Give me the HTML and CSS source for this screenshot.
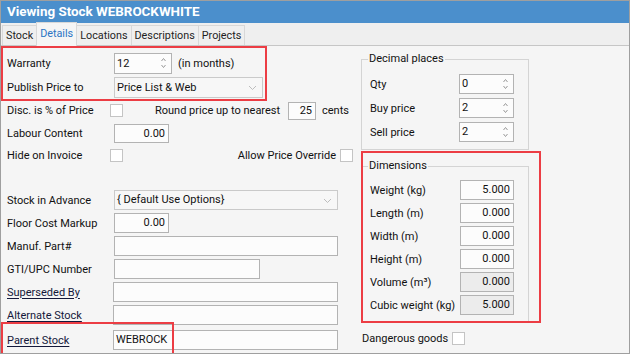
FILE: index.html
```html
<!DOCTYPE html>
<html lang="en">
<head>
  <meta charset="UTF-8" />
  <title>Viewing Stock WEBROCKWHITE</title>
  <link rel="stylesheet" href="styles.css">
</head>
<body>
  <div class="window">
    <div class="titlebar">Viewing Stock WEBROCKWHITE</div>

    <div class="tabs">
      <div class="tab">Stock</div>
      <div class="tab active">Details</div>
      <div class="tab">Locations</div>
      <div class="tab">Descriptions</div>
      <div class="tab">Projects</div>
    </div>

    <div class="panel">
      <div class="col-left">
        <div class="row tall">
          <span class="lbl">Warranty</span>
          <div class="field spin w58">12
            <svg class="arrows" width="7" height="14" viewBox="0 0 7 14"><path d="M1.5 5 L3.5 2.5 L5.5 5 M1.5 9 L3.5 11.5 L5.5 9" /></svg>
          </div>
          <span class="after">(in months)</span>
        </div>
        <div class="row tall">
          <span class="lbl">Publish Price to</span>
          <div class="field combo w149">Price List &amp; Web
            <svg class="chev" width="9" height="6" viewBox="0 0 9 6"><path d="M1 1 L4.5 4.5 L8 1" /></svg>
          </div>
        </div>
        <div class="row short">
          <span class="lbl cb">Disc. is % of Price</span>
          <span class="check"></span>
          <span class="round-lbl">Round price up to nearest</span>
          <div class="field num w28 h18">25</div>
          <span class="after">cents</span>
        </div>
        <div class="row">
          <span class="lbl">Labour Content</span>
          <div class="field num w55 h19">0.00</div>
        </div>
        <div class="row shorter">
          <span class="lbl cb">Hide on Invoice</span>
          <span class="check"></span>
          <span class="override">Allow Price Override</span>
          <span class="check"></span>
        </div>

        <div class="row spaced">
          <span class="lbl">Stock in Advance</span>
          <div class="field combo w224">{ Default Use Options}
            <svg class="chev" width="9" height="6" viewBox="0 0 9 6"><path d="M1 1 L4.5 4.5 L8 1" /></svg>
          </div>
        </div>
        <div class="row">
          <span class="lbl">Floor Cost Markup</span>
          <div class="field num w55">0.00</div>
        </div>
        <div class="row">
          <span class="lbl">Manuf. Part#</span>
          <div class="field w224"></div>
        </div>
        <div class="row">
          <span class="lbl">GTI/UPC Number</span>
          <div class="field w146"></div>
        </div>
        <div class="row">
          <span class="lbl link">Superseded By</span>
          <div class="field w225"></div>
        </div>
        <div class="row">
          <span class="lbl link">Alternate Stock</span>
          <div class="field w225"></div>
        </div>
        <div class="row parent">
          <span class="lbl link">Parent Stock</span>
          <div class="field w225">WEBROCK</div>
        </div>
      </div>

      <div class="col-right">
        <fieldset class="group decimals">
          <legend>Decimal places</legend>
          <div class="grow">
            <span class="glbl">Qty</span>
            <div class="field spin w55">0
              <svg class="arrows" width="7" height="14" viewBox="0 0 7 14"><path d="M1.5 5 L3.5 2.5 L5.5 5 M1.5 9 L3.5 11.5 L5.5 9" /></svg>
            </div>
          </div>
          <div class="grow">
            <span class="glbl">Buy price</span>
            <div class="field spin w55">2
              <svg class="arrows" width="7" height="14" viewBox="0 0 7 14"><path d="M1.5 5 L3.5 2.5 L5.5 5 M1.5 9 L3.5 11.5 L5.5 9" /></svg>
            </div>
          </div>
          <div class="grow">
            <span class="glbl">Sell price</span>
            <div class="field spin w55">2
              <svg class="arrows" width="7" height="14" viewBox="0 0 7 14"><path d="M1.5 5 L3.5 2.5 L5.5 5 M1.5 9 L3.5 11.5 L5.5 9" /></svg>
            </div>
          </div>
        </fieldset>

        <fieldset class="group dims">
          <legend>Dimensions</legend>
          <div class="grow"><span class="glbl">Weight (kg)</span><div class="field num w54">5.000</div></div>
          <div class="grow"><span class="glbl">Length (m)</span><div class="field num w54">0.000</div></div>
          <div class="grow"><span class="glbl">Width (m)</span><div class="field num w54">0.000</div></div>
          <div class="grow"><span class="glbl">Height (m)</span><div class="field num w54">0.000</div></div>
          <div class="grow"><span class="glbl">Volume (m³)</span><div class="field num w54 readonly">0.000</div></div>
          <div class="grow"><span class="glbl">Cubic weight (kg)</span><div class="field num w54 readonly">5.000</div></div>
        </fieldset>

        <div class="row danger">
          <span class="dlbl">Dangerous goods</span>
          <span class="check"></span>
        </div>
      </div>
    </div>

    <!-- highlight marks drawn over the form -->
    <div class="mark mark-warranty"></div>
    <div class="mark mark-dims"></div>
    <div class="mark mark-parent"></div>
  </div>
</body>
</html>
```

FILE: styles.css
```css
html, body {
  margin: 0;
  padding: 0;
}
body {
  background-color: #ffffff;
  font-family: Roboto, "Liberation Sans", sans-serif;
  font-size: 11px;
  color: #111111;
}
.window {
  position: relative;
  width: 630px;
  height: 354px;
  box-sizing: border-box;
  border: 1px solid #9f9f9f;
  background-color: #f5f5f5;
  overflow: hidden;
}
.titlebar {
  height: 22px;
  line-height: 21px;
  padding-left: 6px;
  background-color: #4b8fcc;
  color: #ffffff;
  font-weight: bold;
  font-size: 13.4px;
}
.tabs {
  display: flex;
  align-items: flex-end;
  height: 22px;
  padding-left: 1px;
  background-color: #efefef;
  border-bottom: 1px solid #c6c6c6;
}
.tab {
  height: 19px;
  line-height: 20px;
  padding: 0 3px;
  border: 1px solid #d8d8d8;
  border-bottom: none;
  margin-right: -1px;
  font-size: 10.8px;
  color: #1e1e1e;
}
.tab.active {
  position: relative;
  height: 23px;
  line-height: 22px;
  margin-bottom: -1px;
  background-color: #f5f5f5;
  color: #2a74c4;
  z-index: 1;
}
.panel {
  display: flex;
  padding: 7px 0 0 6px;
}
.col-left {
  display: flex;
  flex-direction: column;
  gap: 3px;
  width: 353px;
}
.row {
  display: flex;
  align-items: center;
  height: 20px;
}
.row.tall {
  height: 21px;
}
.row.short {
  height: 19px;
}
.row.shorter {
  height: 18px;
}
.row.spaced {
  margin-top: 23px;
}
.row.parent {
  margin-top: 2px;
}
.lbl {
  width: 107px;
  flex-shrink: 0;
  white-space: nowrap;
}
.lbl.cb {
  width: 103px;
}
.lbl.link {
  width: 106px;
  text-decoration: underline;
  text-underline-offset: 2px;
  color: #14183a;
}
.after {
  margin-left: 6px;
}
.round-lbl {
  margin-left: 32px;
  width: 133px;
  white-space: nowrap;
}
.override {
  margin-left: auto;
  margin-right: 4px;
  white-space: nowrap;
}
.row.shorter .check:last-child {
  margin-right: 7px;
}
.check {
  width: 11px;
  height: 11px;
  border: 1px solid #c4c4c4;
  background-color: #ffffff;
  flex-shrink: 0;
}
.field {
  position: relative;
  box-sizing: border-box;
  height: 20px;
  line-height: 18px;
  padding: 0 3px 0 2px;
  border: 1px solid #b3b3b3;
  background-color: #fcfcfc;
  white-space: nowrap;
  flex-shrink: 0;
}
.row.tall .field {
  height: 21px;
  line-height: 19px;
}
.field.h18 {
  height: 18px;
  line-height: 16px;
}
.field.h19 {
  height: 19px;
  line-height: 17px;
}
.field.num {
  text-align: right;
}
.field.readonly {
  background-color: #ececec;
}
.field.combo {
  border-color: #cacaca;
  background-color: #f7f7f7;
}
.w28 { width: 28px; }
.w54 { width: 54px; }
.w55 { width: 55px; }
.w58 { width: 58px; }
.w146 { width: 146px; }
.w149 { width: 149px; }
.w224 { width: 224px; }
.w225 { width: 225px; }
.arrows {
  position: absolute;
  right: 4px;
  top: 2px;
}
.arrows path {
  fill: none;
  stroke: #9a9a9a;
  stroke-width: 1;
}
.chev {
  position: absolute;
  right: 5px;
  top: 7px;
}
.chev path {
  fill: none;
  stroke: #bdbdbd;
  stroke-width: 1;
}
.col-right {
  width: 168px;
  margin-top: -1px;
  margin-left: 1px;
}
.group {
  box-sizing: border-box;
  width: 168px;
  margin: 0;
  padding: 8px 0 7px 8px;
  border: 1px solid #d4d4d4;
  display: flex;
  flex-direction: column;
  gap: 4px;
}
.group legend {
  padding: 0 1px;
  margin-left: -2px;
  line-height: 14px;
}
.group.dims {
  margin-top: 9px;
  padding-top: 7px;
  padding-bottom: 6px;
  gap: 3px;
}
.grow {
  display: flex;
  align-items: center;
  height: 20px;
}
.glbl {
  width: 89px;
  white-space: nowrap;
}
.dims .glbl {
  width: 90px;
}
.row.danger {
  height: 18px;
  margin-top: 7px;
  margin-left: 1px;
}
.dlbl {
  width: 90px;
}
.mark {
  position: absolute;
  box-sizing: border-box;
  border: 2px solid #ec3d44;
}
.mark-warranty {
  left: 0;
  top: 45px;
  width: 266px;
  height: 55px;
}
.mark-dims {
  left: 360px;
  top: 150px;
  width: 180px;
  height: 172px;
}
.mark-parent {
  left: 0;
  top: 321px;
  width: 173px;
  height: 33px;
}
```
